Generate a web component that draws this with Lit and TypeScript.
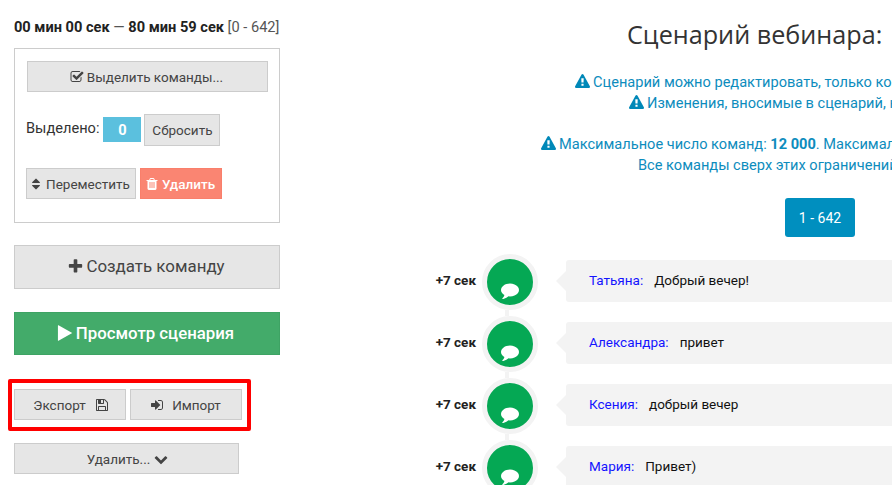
import { LitElement, html, css, svg } from "lit";
import { customElement } from "lit/decorators.js";

const P: Record<string, string> = {
  check: "M1472 930v318q0 119-84.5 203.5t-203.5 84.5h-832q-119 0-203.5-84.5t-84.5-203.5v-832q0-119 84.5-203.5t203.5-84.5h832q63 0 117 25 15 7 18 23 3 17-9 29l-49 49q-10 10-23 10-3 0-9-2-23-6-45-6h-832q-66 0-113 47t-47 113v832q0 66 47 113t113 47h832q66 0 113-47t47-113v-254q0-13 9-22l64-64q10-10 23-10 6 0 12 3 20 8 20 29zm231-489l-814 814q-24 24-57 24t-57-24l-430-430q-24-24-24-57t24-57l110-110q24-24 57-24t57 24l263 263 647-647q24-24 57-24t57 24l110 110q24 24 24 57t-24 57z",
  sort: "M1408 1088q0 26-19 45l-448 448q-19 19-45 19t-45-19l-448-448q-19-19-19-45t19-45 45-19h896q26 0 45 19t19 45zm0-384q0 26-19 45t-45 19h-896q-26 0-45-19t-19-45 19-45l448-448q19-19 45-19t45 19l448 448q19 19 19 45z",
  trash: "M704 1376v-704q0-14-9-23t-23-9h-64q-14 0-23 9t-9 23v704q0 14 9 23t23 9h64q14 0 23-9t9-23zm256 0v-704q0-14-9-23t-23-9h-64q-14 0-23 9t-9 23v704q0 14 9 23t23 9h64q14 0 23-9t9-23zm256 0v-704q0-14-9-23t-23-9h-64q-14 0-23 9t-9 23v704q0 14 9 23t23 9h64q14 0 23-9t9-23zm-544-992h448l-48-117q-7-9-17-11h-317q-10 2-17 11zm928 32v64q0 14-9 23t-23 9h-96v948q0 83-47 143.5t-113 60.5h-832q-66 0-113-58.5t-47-141.5v-952h-96q-14 0-23-9t-9-23v-64q0-14 9-23t23-9h309l70-167q15-37 54-63t79-26h320q40 0 79 26t54 63l70 167h309q14 0 23 9t9 23z",
  plus: "M1600 736v192q0 40-28 68t-68 28h-416v416q0 40-28 68t-68 28h-192q-40 0-68-28t-28-68v-416h-416q-40 0-68-28t-28-68v-192q0-40 28-68t68-28h416v-416q0-40 28-68t68-28h192q40 0 68 28t28 68v416h416q40 0 68 28t28 68z",
  play: "M1576 927l-1328 738q-23 13-39.5 3t-16.5-36v-1472q0-26 16.5-36t39.5 3l1328 738q23 13 23 31t-23 31z",
  save: "M512 1536h768v-384h-768v384zm896 0h128v-896q0-14-10-38.5t-20-34.5l-281-281q-10-10-34-20t-39-10v416q0 40-28 68t-68 28h-576q-40 0-68-28t-28-68v-416h-128v1280h128v-416q0-40 28-68t68-28h832q40 0 68 28t28 68v416zm-384-928v-320q0-13-9.5-22.5t-22.5-9.5h-192q-13 0-22.5 9.5t-9.5 22.5v320q0 13 9.5 22.5t22.5 9.5h192q13 0 22.5-9.5t9.5-22.5zm640 32v928q0 40-28 68t-68 28h-1344q-40 0-68-28t-28-68v-1344q0-40 28-68t68-28h928q40 0 88 20t76 48l280 280q28 28 48 76t20 88z",
  signin: "M1312 896q0 26-19 45l-544 544q-19 19-45 19t-45-19-19-45v-288h-448q-26 0-45-19t-19-45v-384q0-26 19-45t45-19h448v-288q0-26 19-45t45-19 45 19l544 544q19 19 19 45zm352-352v704q0 119-84.5 203.5t-203.5 84.5h-320q-13 0-22.5-9.5t-9.5-22.5q0-4-1-20t-.5-26.5 3-23.5 10-19.5 20.5-6.5h320q66 0 113-47t47-113v-704q0-66-47-113t-113-47h-312l-11.5-1-11.5-3-8-5.5-7-9-2-13.5q0-4-1-20t-.5-26.5 3-23.5 10-19.5 20.5-6.5h320q119 0 203.5 84.5t84.5 203.5z",
  chevron: "M1683 808l-742 741q-19 19-45 19t-45-19l-742-741q-19-19-19-45.5t19-45.5l166-165q19-19 45-19t45 19l531 531 531-531q19-19 45-19t45 19l166 165q19 19 19 45.5t-19 45.5z",
  warn: "M1024 1375v-190q0-14-9.5-23.5t-22.5-9.5h-192q-13 0-22.5 9.5t-9.5 23.5v190q0 14 9.5 23.5t22.5 9.5h192q13 0 22.5-9.5t9.5-23.5zm-2-374l18-459q0-12-10-19-13-11-24-11h-220q-11 0-24 11-10 7-10 21l17 457q0 10 10 16.5t24 6.5h185q14 0 23.5-6.5t10.5-16.5zm-14-934l768 1408q35 63-2 126-17 29-46.5 46t-63.5 17h-1536q-34 0-63.5-17t-46.5-46q-37-63-2-126l768-1408q17-31 47-49t65-18 65 18 47 49z",
  comment: "M1792 896q0 174-120 321.5t-326 233-450 85.5q-70 0-145-8-198 175-460 242-49 14-114 22-17 2-30.5-9t-17.5-29v-1q-3-4-.5-12t2-10 4.5-9.5l6-9 7-8.5 8-9q7-8 31-34.5t34.5-38 31-39.5 32.5-51 27-59 26-76q-157-89-247.5-220t-90.5-281q0-130 71-248.5t191-204.5 286-136.5 348-50.5q244 0 450 85.5t326 233 120 321.5z",
};

const icon = (n: string, cls = "") =>
  html`<svg class="ic ${cls}" viewBox="0 0 1792 1792" fill="currentColor">${svg`<path d=${P[n]}></path>`}</svg>`;

const ROWS = [
  ["Татьяна:", "Добрый вечер!"],
  ["Александра:", "привет"],
  ["Ксения:", "добрый вечер"],
  ["Мария:", "Привет)"],
];

@customElement("app-root")
export class AppRoot extends LitElement {
  static styles = css`
    :host { display: block; width: 892px; height: 485px; overflow: hidden; font-family: Roboto, "Liberation Sans", sans-serif; font-size: 13.5px; color: #333; background: #fff; }
    * { box-sizing: border-box; }
    .page { display: flex; width: 892px; height: 485px; overflow: hidden; }
    .left { flex: none; width: 266px; margin: 0 14px; padding-top: 17px; }
    .range { line-height: 20px; white-space: nowrap; color: #555; font-size: 14.6px; }
    .range b { color: #222; }
    .panel { margin-top: 11px; border: 1px solid #ccc; padding: 12px 11px 23px 12px; }
    .btn { display: flex; align-items: center; justify-content: center; gap: 3px; height: 31px; background: #e6e6e6; border: 1px solid #ccc; color: #444; white-space: nowrap; font-size: 13.5px; }
    .ic { width: 14px; height: 14px; flex: none; }
    .pick { padding-right: 2px; }
    .sel { margin-top: 22px; display: flex; align-items: center; height: 32px; margin-left: -1px; }
    .sel-label { color: #333; margin-top: -4px; font-size: 14.6px; }
    .badge { width: 38px; height: 25px; margin-left: 4px; margin-top: -1px; background: #5bc0de; color: #fff; font-weight: 700; font-size: 14.6px; display: flex; align-items: center; justify-content: center; }
    .reset { width: 76px; height: 32px; margin-left: 3px; }
    .acts { margin: 22px 0 0 -1px; display: flex; gap: 4px; }
    .move { width: 110px; padding-right: 3px; }
    .del { width: 82px; padding-right: 2px; background: #fa8572; border-color: #f97f6b; color: #fff; font-weight: 500; }
    .create { margin-top: 22px; height: 44px; font-size: 16.9px; gap: 2px; padding: 0 2px 2px 0; }
    .create .ic { width: 17px; height: 17px; }
    .preview { margin-top: 23px; height: 43px; font-size: 16.8px; font-weight: 500; gap: 3px; padding: 0 4px 2px 0; background: #43ab6a; border-color: #3ea364; color: #fff; }
    .preview .ic { width: 18px; height: 18px; margin-right: -1px; }
    .io { position: relative; margin-top: 34px; display: flex; gap: 4px; width: 228px; }
    .io::after { content: ""; position: absolute; inset: -10px -9px -11px -6px; border: 4px solid #f00; border-radius: 2px; pointer-events: none; }
    .io .btn { width: 112px; gap: 9px; }
    .io .exp { padding-left: 2px; }
    .io .imp { gap: 8px; padding-right: 1px; }
    .wipe { margin-top: 23px; width: 225px; gap: 4px; padding-left: 2px; }
    .right { flex: none; width: 598px; overflow: hidden; }
    .title { margin: 17px 0 0 333px; font-family: "Open Sans", sans-serif; font-size: 25.2px; line-height: 34px; color: #333; white-space: nowrap; }
    .notes { margin-top: 21px; color: #0d8cbd; font-size: 14.6px; line-height: 20.5px; white-space: nowrap; }
    .notes .ic { display: inline-block; vertical-align: -2px; margin-right: 3px; color: #0088b8; width: 15px; height: 15px; }
    .notes div { height: 20.5px; }
    .n1 { margin-left: 281px; }
    .n2 { margin-left: 335px; }
    .n3 { margin-left: 247px; margin-top: 21px; }
    .n4 { margin-left: 344px; }
    .pages { margin: 23px 0 0 491px; width: 70px; height: 39px; border-radius: 3px; background: #008fbf; color: #fff; display: flex; align-items: center; justify-content: center; font-size: 14px; }
    .rows { margin-top: 13px; }
    .row { display: flex; align-items: center; height: 62px; }
    .time { width: 182px; text-align: right; font-weight: 700; color: #222; margin-top: -2px; }
    .ring { position: relative; width: 56px; height: 56px; margin: 2px 0 0 6px; flex: none; border: 5px solid #f3f3f3; border-radius: 50%; background: #05a854; display: flex; justify-content: center; padding-top: 22px; color: #fff; }
    .ring::after { content: ""; position: absolute; left: 18px; top: 51px; width: 4px; height: 6px; background: #f3f3f3; }
    .ring .ic { width: 18px; height: 18px; }
    .bubble { position: relative; margin-left: 28px; flex: 1; height: 42px; background: #f3f3f3; border-radius: 3px 0 0 3px; padding: 0 0 2px 23px; display: flex; align-items: center; gap: 11px; color: #111; white-space: nowrap; }
    .bubble::before { content: ""; position: absolute; left: -10px; top: 11px; border-style: solid; border-width: 10px 10px 10px 0; border-color: transparent #f3f3f3 transparent transparent; }
    .name { color: #1414ff; }
  `;

  render() {
    return html`<div class="page">
      <div class="left">
        <div class="range"><b>00 мин 00 сек</b> — <b>80 мин 59 сек</b> [0 - 642]</div>
        <div class="panel">
          <div class="btn pick">${icon("check")} Выделить команды...</div>
          <div class="sel">
            <span class="sel-label">Выделено:</span>
            <span class="badge">0</span>
            <div class="btn reset">Сбросить</div>
          </div>
          <div class="acts">
            <div class="btn move">${icon("sort")} Переместить</div>
            <div class="btn del">${icon("trash")} Удалить</div>
          </div>
        </div>
        <div class="btn create">${icon("plus")} Создать команду</div>
        <div class="btn preview">${icon("play")} Просмотр сценария</div>
        <div class="io">
          <div class="btn exp">Экспорт ${icon("save")}</div>
          <div class="btn imp">${icon("signin")} Импорт</div>
        </div>
        <div class="btn wipe">Удалить... ${icon("chevron")}</div>
      </div>
      <div class="right">
        <div class="title">Сценарий вебинара:</div>
        <div class="notes">
          <div class="n1">${icon("warn")}Сценарий можно редактировать, только когда</div>
          <div class="n2">${icon("warn")}Изменения, вносимые в сценарий, не</div>
          <div class="n3">${icon("warn")}Максимальное число команд: <b>12 000</b>. Максимальное</div>
          <div class="n4">Все команды сверх этих ограничений</div>
        </div>
        <div class="pages">1 - 642</div>
        <div class="rows">
          ${ROWS.map(
            ([n, m]) => html`<div class="row">
              <div class="time">+7 сек</div>
              <div class="ring">${icon("comment")}</div>
              <div class="bubble"><span class="name">${n}</span><span>${m}</span></div>
            </div>`
          )}
        </div>
      </div>
    </div>`;
  }
}
